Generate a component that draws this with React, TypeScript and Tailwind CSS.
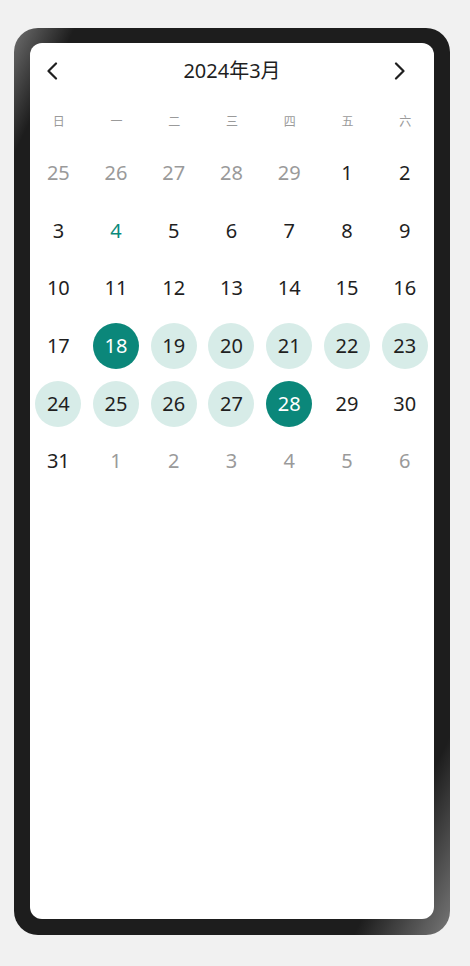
import React from 'react'

const weekdays = ['日', '一', '二', '三', '四', '五', '六']

type Day = { n: number; cur: boolean }

const days: Day[] = [
  ...[25, 26, 27, 28, 29].map((n) => ({ n, cur: false })),
  ...Array.from({ length: 31 }, (_, i) => ({ n: i + 1, cur: true })),
  ...[1, 2, 3, 4, 5, 6].map((n) => ({ n, cur: false })),
]

const start = 18
const end = 28
const today = 4

function DayCell({ day }: { day: Day }) {
  const isEdge = day.cur && (day.n === start || day.n === end)
  const inRange = day.cur && day.n > start && day.n < end

  let text = 'text-[#1f1f1f]'
  if (!day.cur) text = 'text-[#9a9a9a]'
  else if (day.n === today) text = 'text-[#0b8a7b]'

  return (
    <div className="h-[57.7px] flex items-center justify-center pr-[1px]">
      {isEdge ? (
        <div className="w-[46px] h-[46px] rounded-full bg-[#0b877a] flex items-center justify-center text-white">
          {day.n}
        </div>
      ) : inRange ? (
        <div className="w-[46px] h-[46px] rounded-full bg-[#d7ece8] flex items-center justify-center text-[#1f1f1f]">
          {day.n}
        </div>
      ) : (
        <span className={text}>{day.n}</span>
      )}
    </div>
  )
}

export default function App() {
  return (
    <div
      className="min-h-screen bg-[#f1f1f1] pt-[28px] pl-[14px]"
      style={{ fontFamily: '"Noto Sans", "Noto Sans CJK SC", sans-serif' }}
    >
      <div className="w-[436px] h-[907px] rounded-[24px] pt-[15px] px-[16px] pb-[16px] bg-[linear-gradient(to_bottom_right,#6e6e6e_0%,#1d1d1d_7%,#1d1d1d_89%,#777777_100%)]">
        <div className="h-full bg-white rounded-[12px] overflow-hidden">
          <div className="h-[56px] grid grid-cols-[1fr_auto_1fr] items-center">
            <button className="justify-self-start ml-[16px] w-[12px] flex items-center">
              <svg width="12" height="18" viewBox="0 0 12 18" fill="none">
                <path d="M10 1.5 L2.5 9 L10 16.5" stroke="#1f1f1f" strokeWidth="2.2" strokeLinecap="round" strokeLinejoin="round" />
              </svg>
            </button>
            <span className="text-[20px] text-[#1f1f1f] leading-none">2024年3月</span>
            <button className="justify-self-end mr-[28px] w-[12px] flex items-center">
              <svg width="12" height="18" viewBox="0 0 12 18" fill="none">
                <path d="M2 1.5 L9.5 9 L2 16.5" stroke="#1f1f1f" strokeWidth="2.2" strokeLinecap="round" strokeLinejoin="round" />
              </svg>
            </button>
          </div>
          <div className="grid grid-cols-7 h-[45px] items-center text-[12px] text-[#9a9a9a]">
            {weekdays.map((w) => (
              <div key={w} className="text-center">
                {w}
              </div>
            ))}
          </div>
          <div className="grid grid-cols-7 text-[20px] leading-none">
            {days.map((d, i) => (
              <DayCell key={i} day={d} />
            ))}
          </div>
        </div>
      </div>
    </div>
  )
}
